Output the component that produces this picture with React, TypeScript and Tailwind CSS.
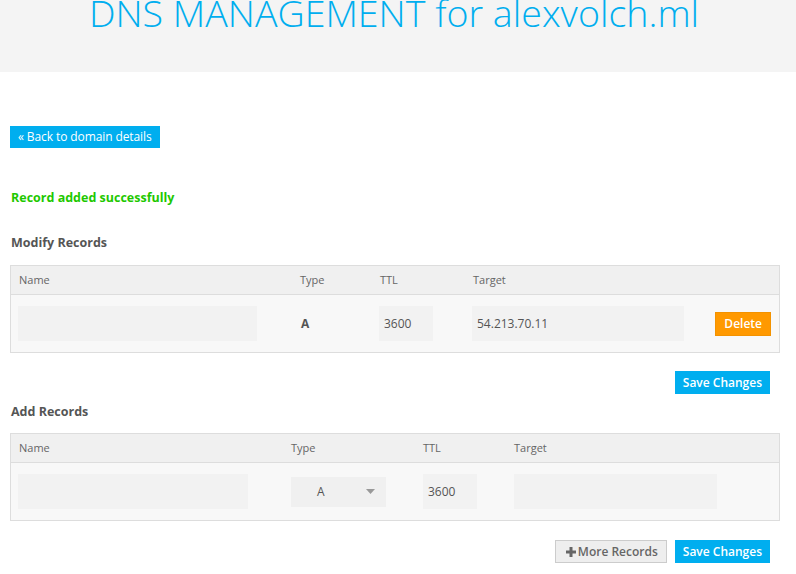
import React from "react";

const font = { fontFamily: '"Open Sans", "Liberation Sans", sans-serif' };

const Field = ({ value, className }: { value?: string; className: string }) => (
    <div className={`h-[35px] bg-[#f2f2f2] flex items-center pl-[5px] text-[12px] text-[#555] ${className}`}>
        {value}
    </div>
);

const Btn = ({ children, className }: { children: React.ReactNode; className: string }) => (
    <button className={`h-[23px] text-[12px] font-semibold leading-none ${className}`}>{children}</button>
);

export default function App() {
    return (
        <div style={font} className="w-[796px] h-[574px] overflow-hidden bg-white text-[#555]">
            <div className="h-[72px] bg-[#f4f4f4] overflow-hidden">
                <h1 className="-mt-[6px] text-center text-[37.6px] leading-[38px] font-light text-[#00aeef] pr-[8px]">
                    DNS MANAGEMENT for alexvolch.ml
                </h1>
            </div>

            <div className="px-[10px]">
                <button className="mt-[54px] h-[22px] px-[8px] bg-[#00aeef] text-white text-[12px] leading-none tracking-[-0.1px]">
                    « Back to domain details
                </button>

                <p className="mt-[41px] text-[12.5px] leading-[18px] font-bold text-[#1ec800] pl-[1px]">
                    Record added successfully
                </p>

                <h2 className="mt-[27px] text-[12.5px] leading-[18px] font-bold text-[#555] pl-[1px]">Modify Records</h2>

                {/* modify table */}
                <div className="mt-[13px] w-[770px] border border-[#dddddd]">
                    <div className="grid grid-cols-[281px_80px_93px_227px_1fr] h-[29px] items-center bg-[#f0f0f0] border-b border-[#dddddd] text-[11px] text-[#666]">
                        <span className="pl-[8px]">Name</span>
                        <span className="pl-[8px]">Type</span>
                        <span className="pl-[8px]">TTL</span>
                        <span className="pl-[8px]">Target</span>
                        <span />
                    </div>
                    <div className="grid grid-cols-[281px_80px_93px_227px_1fr] h-[57px] items-center bg-[#f8f8f8]">
                        <div className="pl-[7px]"><Field className="w-[239px]" /></div>
                        <div className="pl-[9px] text-[12px] font-bold text-[#555]">A</div>
                        <div className="pl-[7px]"><Field value="3600" className="w-[54px] text-[12px]" /></div>
                        <div className="pl-[7px]"><Field value="54.213.70.11" className="w-[212px]" /></div>
                        <div className="flex justify-end pr-[8px]">
                            <Btn className="bg-[#ff9900] border border-[#f39200] text-white h-[24px] px-[8px]">Delete</Btn>
                        </div>
                    </div>
                </div>

                <div className="w-[760px] flex justify-end mt-[18px]">
                    <Btn className="bg-[#00aeef] text-white px-[8px]">Save Changes</Btn>
                </div>

                <h2 className="mt-[9px] text-[12.5px] leading-[18px] font-bold text-[#555] pl-[1px]">Add Records</h2>

                {/* add table */}
                <div className="mt-[12px] w-[770px] border border-[#dddddd]">
                    <div className="grid grid-cols-[272px_132px_91px_1fr] h-[29px] items-center bg-[#f0f0f0] border-b border-[#dddddd] text-[11px] text-[#666]">
                        <span className="pl-[8px]">Name</span>
                        <span className="pl-[8px]">Type</span>
                        <span className="pl-[8px]">TTL</span>
                        <span className="pl-[8px]">Target</span>
                    </div>
                    <div className="grid grid-cols-[272px_132px_91px_1fr] h-[57px] items-center bg-[#f8f8f8]">
                        <div className="pl-[7px]"><Field className="w-[230px]" /></div>
                        <div className="pl-[8px]">
                            <div className="w-[95px] h-[30px] bg-[#f0f0f0] flex items-center justify-between pl-[26px] pr-[11px] text-[12px] text-[#555]">
                                <span>A</span>
                                <svg width="9" height="5" viewBox="0 0 9 5"><path d="M0 0h9L4.5 5z" fill="#999" /></svg>
                            </div>
                        </div>
                        <div className="pl-[8px]"><Field value="3600" className="w-[54px]" /></div>
                        <div className="pl-[8px]"><Field className="w-[203px]" /></div>
                    </div>
                </div>

                <div className="w-[760px] flex justify-end gap-[8px] mt-[19px]">
                    <Btn className="bg-[#eeeeee] border border-[#cccccc] text-[#666] flex items-center gap-[2px] pl-[10px] pr-[8px]">
                        <svg width="10" height="10" viewBox="0 0 10 10"><path d="M3.5 0h3v3.5H10v3H6.5V10h-3V6.5H0v-3h3.5z" fill="#666" /></svg>
                        More Records
                    </Btn>
                    <Btn className="bg-[#00aeef] text-white px-[8px]">Save Changes</Btn>
                </div>
            </div>
        </div>
    );
}
